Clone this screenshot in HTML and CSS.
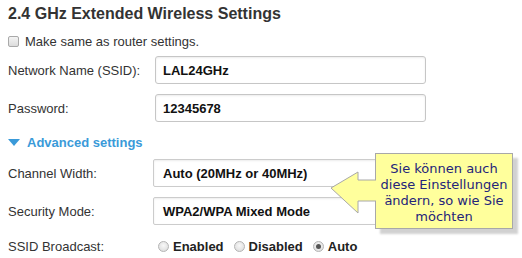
FILE: index.html
```html
<!DOCTYPE html>
<html>
<head>
<meta charset="utf-8">
<link rel="stylesheet" href="styles.css">
</head>
<body>
<div class="page">
  <h1 class="title">2.4 GHz Extended Wireless Settings</h1>
  <label class="check-row"><input type="checkbox" class="check"><span>Make same as router settings.</span></label>
  <div class="row row-input">
    <span class="label">Network Name (SSID):</span>
    <div class="field">LAL24GHz</div>
  </div>
  <div class="row row-input">
    <span class="label">Password:</span>
    <div class="field">12345678</div>
  </div>
  <div class="advanced"><span class="tri"></span>Advanced settings</div>
  <div class="row row-select">
    <span class="label label-select">Channel Width:</span>
    <div class="select">Auto (20MHz or 40MHz)</div>
  </div>
  <div class="row row-select">
    <span class="label label-select">Security Mode:</span>
    <div class="select">WPA2/WPA Mixed Mode</div>
  </div>
  <div class="row row-radio">
    <span class="label label-radio">SSID Broadcast:</span>
    <div class="radios">
      <label class="radio-opt"><span class="radio"></span>Enabled</label>
      <label class="radio-opt"><span class="radio"></span>Disabled</label>
      <label class="radio-opt"><span class="radio on"></span>Auto</label>
    </div>
  </div>
</div>
<div class="callout">Sie können auch<br>diese Einstellungen<br>ändern, so wie Sie<br>möchten</div>
<svg class="arrow" width="52" height="48" viewBox="328 170 52 48">
  <polygon points="331,188 358,172 358,180 377,180 377,201 358,201 358,213" fill="#ffff9c"/>
  <polyline points="376,180 358,180 358,172 331,188 358,213 358,201 376,201" fill="none" stroke="#a8a8a8" stroke-width="1"/>
</svg>
</body>
</html>
```
FILE: styles.css
```css
html, body {
  margin: 0;
  padding: 0;
  background: #ffffff;
}
body {
  width: 522px;
  height: 258px;
  overflow: hidden;
  position: relative;
  font-family: "Liberation Sans", Arial, sans-serif;
  color: #333333;
}
.page {
  padding: 4px 0 0 8px;
  display: flex;
  flex-direction: column;
}
.title {
  margin: 0;
  font-size: 16px;
  font-weight: bold;
  line-height: 20px;
  color: #333333;
}
.check-row {
  display: flex;
  align-items: center;
  height: 18px;
  margin-top: 8px;
  font-size: 13px;
}
.check {
  appearance: none;
  -webkit-appearance: none;
  width: 11px;
  height: 11px;
  margin: 0 6px 0 0;
  border: 1px solid #a9a9a9;
  border-radius: 2px;
  background: linear-gradient(#f4f4f4, #dcdcdc);
}
.row {
  display: flex;
  align-items: center;
  font-size: 13px;
}
.row-input {
  margin-top: 6px;
  height: 28px;
}
.row-input + .row-input {
  margin-top: 10px;
}
.label {
  width: 147px;
  flex: none;
}
.label-select {
  width: 145px;
}
.label-radio {
  width: 150px;
}
.field, .select {
  box-sizing: border-box;
  height: 28px;
  border: 1px solid #c6c6c6;
  border-radius: 3px;
  background: #ffffff;
  box-shadow: inset 0 1px 2px rgba(0,0,0,0.08);
  font-weight: bold;
  font-size: 13px;
  display: flex;
  align-items: center;
  padding-left: 7px;
  color: #111111;
}
.field {
  width: 271px;
}
.select {
  width: 274px;
  padding-left: 9px;
  border-radius: 2px;
  border-color: #cccccc;
}
.advanced {
  margin-top: 12px;
  height: 16px;
  display: flex;
  align-items: center;
  color: #3a9ad9;
  font-weight: bold;
  font-size: 13px;
}
.tri {
  width: 0;
  height: 0;
  border-left: 6px solid transparent;
  border-right: 6px solid transparent;
  border-top: 7px solid #3a9ad9;
  margin-right: 7px;
}
.row-select {
  height: 28px;
  margin-top: 9px;
}
.row-select + .row-select {
  margin-top: 10px;
}
.row-radio {
  margin-top: 12px;
  height: 18px;
}
.radios {
  display: flex;
  align-items: center;
  gap: 10px;
}
.radio-opt {
  display: flex;
  align-items: center;
  font-weight: bold;
  color: #222222;
}
.radio {
  box-sizing: border-box;
  width: 11px;
  height: 11px;
  border-radius: 50%;
  border: 1px solid #b4b4b4;
  background: radial-gradient(circle at 50% 40%, #f8f8f8, #d8d8d8);
  margin-right: 4px;
  position: relative;
}
.radio.on::after {
  content: "";
  position: absolute;
  left: 2px;
  top: 2px;
  width: 5px;
  height: 5px;
  border-radius: 50%;
  background: #555555;
}
.callout {
  position: absolute;
  left: 375px;
  top: 153px;
  width: 136px;
  height: 70px;
  border: 1px solid #a8a8a8;
  background: #ffff9c;
  box-shadow: 5px 5px 2px rgba(0,0,0,0.18);
  font-family: "DejaVu Sans", Verdana, sans-serif;
  font-size: 13px;
  line-height: 16px;
  color: #24247a;
  text-align: center;
  box-sizing: content-box;
  padding-top: 4px;
  display: flex;
  align-items: center;
  justify-content: center;
}
.arrow {
  position: absolute;
  left: 328px;
  top: 170px;
}
```
